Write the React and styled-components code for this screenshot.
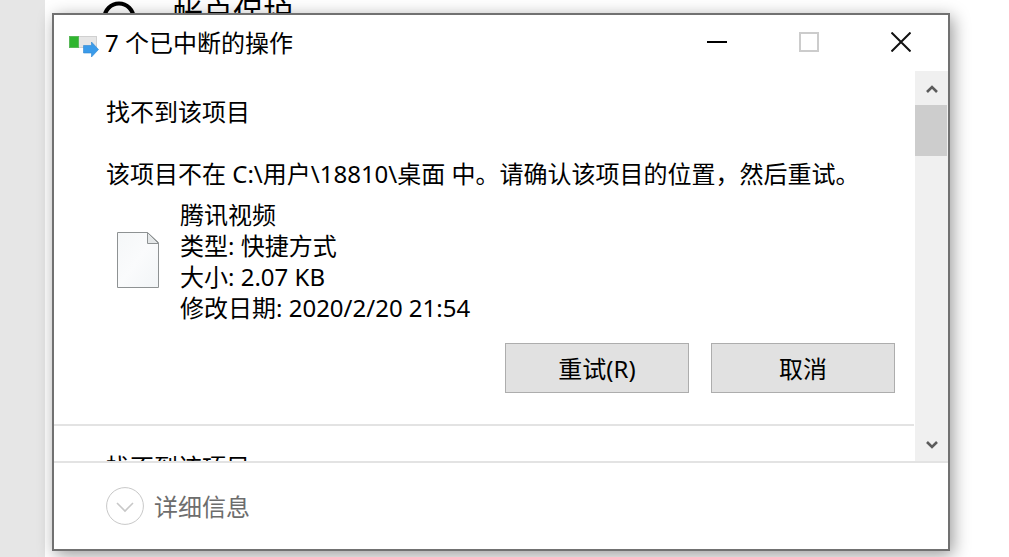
import React from 'react';
import styled, { createGlobalStyle } from 'styled-components';

const GlobalStyle = createGlobalStyle`
    * {
        box-sizing: border-box;
    }
    body {
        margin: 0;
        overflow: hidden;
        font-family: "Noto Sans", "Noto Sans CJK SC", sans-serif;
        font-size: 24px;
        line-height: 31px;
        color: #000;
    }
    h1, h2, p {
        margin: 0;
        font-size: inherit;
        font-weight: inherit;
    }
    button {
        font: inherit;
        color: inherit;
    }
    svg {
        display: block;
    }
`
const Screen = styled.div`
    position: relative;
    min-height: 100vh;
    display: flex;
    background-color: #fff;
    overflow: hidden;
`
const Sidebar = styled.div`
    width: 45px;
    background-color: #e6e6e6;
`
const SettingsPage = styled.div`
    position: absolute;
    top: -5px;
    left: 102px;
    display: flex;
    align-items: center;
    gap: 37px;
    font-size: 30px;
    line-height: 36px;
`
const Overlay = styled.div`
    position: absolute;
    inset: 0;
    padding: 13px 59px 6px 52px;
`
const Dialog = styled.section`
    border: 2px solid #717171;
    background-color: #fff;
    box-shadow: 3px 4px 16px rgba(0, 0, 0, 0.4);
`
const TitleBar = styled.header`
    height: 56px;
    display: flex;
    align-items: center;
    padding: 0 1px 2px 15px;
`
const Title = styled.h1`
    flex: 1;
    margin-left: 6px;
`
const WindowButton = styled.button`
    width: 92px;
    height: 54px;
    padding: 0;
    border: none;
    background: none;
    display: grid;
    place-items: center;
`
const Body = styled.div`
    display: flex;
    height: 390px;
`
const List = styled.div`
    flex: 1;
    min-width: 0;
    overflow: hidden;
`
const Entry = styled.article`
    display: flex;
    flex-direction: column;
    padding: 25px 19px 31px 52px;
    margin-right: 1px;
    border-bottom: 2px solid #e3e3e3;
`
const Message = styled.p`
    margin-top: 31px;
    white-space: nowrap;
`
const FileRow = styled.div`
    display: flex;
    align-items: center;
    gap: 20px;
    margin-top: 10px;
    padding-left: 10px;
`
const Actions = styled.div`
    display: flex;
    justify-content: flex-end;
    gap: 22px;
    margin-top: 20px;
`
const ActionButton = styled.button`
    width: 184px;
    height: 50px;
    padding: 0;
    border: 1px solid #adadad;
    background-color: #e1e1e1;
`
const ScrollBar = styled.div`
    width: 33px;
    display: flex;
    flex-direction: column;
    background-color: #f0f0f0;
`
const ScrollButton = styled.button`
    height: 34px;
    padding: 0;
    border: none;
    background: none;
    display: grid;
    place-items: center;
`
const Track = styled.div`
    flex: 1;
`
const Thumb = styled.div`
    width: 32px;
    height: 51px;
    background-color: #cdcdcd;
`
const Footer = styled.footer`
    height: 88px;
    display: flex;
    align-items: center;
    padding-left: 52px;
    border-top: 2px solid #e3e3e3;
`
const DetailsButton = styled.button`
    display: flex;
    align-items: center;
    gap: 10px;
    padding: 0;
    border: none;
    background: none;
    color: #6d6d6d;
`

const CopyIcon = () => (
    <svg width="30" height="30" viewBox="0 -9 30 30" aria-hidden="true">
        <rect x="0.5" y="0.5" width="27" height="11" fill="#e6e6e6" stroke="#d0d0d0" />
        <rect x="0.5" y="0.5" width="9" height="11" fill="#2fb52f" stroke="#59b859" />
        <path d="M14.5 9.5h8V6l7 7.5-7 7.5v-4h-8z" fill="#3a9bea" stroke="#2f86d0" strokeWidth="0.6" />
    </svg>
)

const FileIcon = () => (
    <svg width="44" height="60" viewBox="0 0 44 60" aria-hidden="true">
        <defs>
            <linearGradient id="paper" x1="0" y1="0" x2="1" y2="1">
                <stop offset="0" stopColor="#f5f7f8" />
                <stop offset="0.5" stopColor="#fafbfc" />
                <stop offset="1" stopColor="#f2f5f7" />
            </linearGradient>
        </defs>
        <path d="M1.5 1.5h30l11 10v45h-41z" fill="url(#paper)" stroke="#8e9293" />
        <path d="M31.5 1.5v11h11z" fill="#e4e7e8" stroke="#8e9293" />
    </svg>
)

const ChevronIcon = ({ down }) => (
    <svg width="12" height="12" viewBox="0 0 12 12" aria-hidden="true">
        <path d={down ? 'M1 4l5 5 5-5' : 'M1 10l5-5 5 5'} fill="none" stroke="#5c5c5c" strokeWidth="2.6" />
    </svg>
)

const conflicts = [
    {
        title: '找不到该项目',
        message: '该项目不在 C:\\用户\\18810\\桌面 中。请确认该项目的位置，然后重试。',
        file: { name: '腾讯视频', type: '快捷方式', size: '2.07 KB', date: '2020/2/20 21:54' },
    },
    { title: '找不到该项目' },
]

const Conflict = ({ title, message, file }) => (
    <Entry>
        <h2>{title}</h2>
        {message && <Message>{message}</Message>}
        {file && (
            <>
                <FileRow>
                    <FileIcon />
                    <div>
                        <p>{file.name}</p>
                        <p>类型: {file.type}</p>
                        <p>大小: {file.size}</p>
                        <p>修改日期: {file.date}</p>
                    </div>
                </FileRow>
                <Actions>
                    <ActionButton>重试(R)</ActionButton>
                    <ActionButton>取消</ActionButton>
                </Actions>
            </>
        )}
    </Entry>
)

const App = () => {
  return (
    <Screen lang="zh-CN">
        <GlobalStyle />
        <Sidebar />
        <SettingsPage>
            <svg width="34" height="36" viewBox="0 0 34 36" aria-hidden="true">
                <circle cx="17" cy="23" r="14.5" fill="none" stroke="#000" strokeWidth="4" />
            </svg>
            <span>帐户保护</span>
        </SettingsPage>
        <Overlay>
            <Dialog role="dialog" aria-labelledby="dialog-title">
                <TitleBar>
                    <CopyIcon />
                    <Title id="dialog-title">7 个已中断的操作</Title>
                    <WindowButton aria-label="最小化">
                        <svg width="20" height="20" viewBox="0 0 20 20"><path d="M0 10h20" stroke="#000" strokeWidth="2" /></svg>
                    </WindowButton>
                    <WindowButton aria-label="最大化" disabled>
                        <svg width="20" height="20" viewBox="0 0 20 20"><path d="M1 1h18v18H1z" fill="none" stroke="#ccc" strokeWidth="2" /></svg>
                    </WindowButton>
                    <WindowButton aria-label="关闭">
                        <svg width="20" height="20" viewBox="0 0 20 20"><path d="M0.5 0.5l19 19M19.5 0.5l-19 19" stroke="#111" strokeWidth="2" /></svg>
                    </WindowButton>
                </TitleBar>
                <Body>
                    <List>
                        {conflicts.map((conflict, i) => (
                            <Conflict key={i} {...conflict} />
                        ))}
                    </List>
                    <ScrollBar>
                        <ScrollButton aria-label="向上滚动"><ChevronIcon /></ScrollButton>
                        <Track><Thumb /></Track>
                        <ScrollButton aria-label="向下滚动"><ChevronIcon down /></ScrollButton>
                    </ScrollBar>
                </Body>
                <Footer>
                    <DetailsButton>
                        <svg width="38" height="38" viewBox="0 0 38 38" aria-hidden="true">
                            <circle cx="19" cy="19" r="18.4" fill="none" stroke="#c8c8c8" />
                            <path d="M11 16l8 8 8-8" fill="none" stroke="#c8c8c8" strokeWidth="1.6" />
                        </svg>
                        详细信息
                    </DetailsButton>
                </Footer>
            </Dialog>
        </Overlay>
    </Screen>
  )
}

export default App
